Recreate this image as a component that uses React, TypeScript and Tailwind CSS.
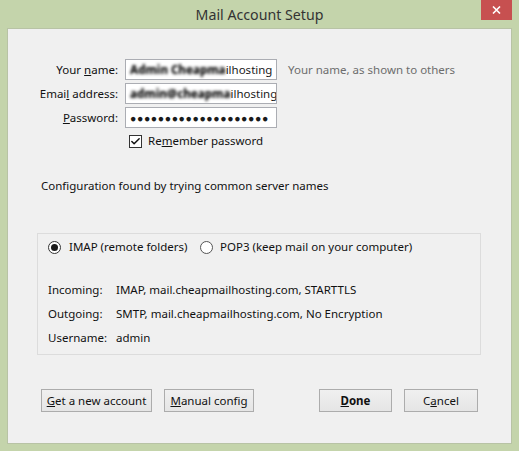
import { Check } from 'lucide-react';

const font = { fontFamily: '"Segoe UI", "Noto Sans", sans-serif' };

function Field({ children, blurred }: { children: React.ReactNode; blurred?: string }) {
  return (
    <div className="h-[21px] w-[152px] border border-[#abadb3] bg-white px-[4px] flex items-center overflow-hidden whitespace-nowrap text-[#1a1a1a]">
      {blurred && <span className="blur-[1.4px] font-extrabold text-black">{blurred}</span>}
      {children}
    </div>
  );
}

function Btn({ children, bold, w }: { children: React.ReactNode; bold?: boolean; w: string }) {
  return (
    <button
      className={`h-[23px] ${w} border border-[#acacac] bg-gradient-to-b from-[#f0f0f0] to-[#e5e5e5] text-[11.5px] leading-[16px] text-[#111] ${bold ? 'font-bold' : ''}`}
    >
      {children}
    </button>
  );
}

export default function App() {
  return (
    <div className="w-[519px] h-[451px] bg-[#c4d4ab] flex flex-col" style={font}>
      {/* title bar */}
      <div className="relative h-[28px] flex items-center justify-center">
        <span className="text-[14.2px] text-[#333] mt-[1px]">Mail Account Setup</span>
        <div className="absolute right-[7px] top-0 w-[31px] h-[20px] bg-[#c75050] flex items-center justify-center">
          <svg width="9" height="8" viewBox="0 0 9 8">
            <path d="M1 0.5 L8 7.5 M8 0.5 L1 7.5" stroke="white" strokeWidth="1.6" />
          </svg>
        </div>
      </div>

      {/* client area */}
      <div className="mx-[7px] h-[416px] bg-[#f0f0f0] border border-[#b8c3a5] text-[11.5px] leading-[16px] text-[#111] flex flex-col">
        <div className="grid grid-cols-[110px_159px_1fr] gap-y-[3px] items-center mt-[30px]">
          <div className="text-right">
            Your <u>n</u>ame:
          </div>
          <div className="ml-[7px]">
            <Field blurred="Admin Cheapma">ilhosting</Field>
          </div>
          <div className="ml-[11px] text-[#6d6d6d]">Your name, as shown to others</div>

          <div className="text-right">
            Emai<u>l</u> address:
          </div>
          <div className="ml-[7px]">
            <Field blurred="admin@cheapma">ilhosting.c</Field>
          </div>
          <div />

          <div className="text-right">
            <u>P</u>assword:
          </div>
          <div className="ml-[7px]">
            <Field>
              <span className="text-[10.5px] tracking-[0.6px]">●●●●●●●●●●●●●●●●●●●●</span>
            </Field>
          </div>
          <div />
        </div>

        <div className="flex items-center h-[16px] mt-[5px] ml-[121px] gap-[6px]">
          <div className="w-[13px] h-[13px] border border-[#333] bg-white flex items-center justify-center">
            <Check className="w-[11px] h-[11px]" strokeWidth={3.2} />
          </div>
          <span>
            Re<u>m</u>ember password
          </span>
        </div>

        <div className="ml-[33px] mt-[29px]">Configuration found by trying common server names</div>

        {/* result group */}
        <div className="ml-[29px] mt-[39px] w-[444px] h-[122px] border border-[#dcdcdc] flex flex-col">
          <div className="flex items-center h-[16px] mt-[5px] ml-[10px]">
            <div className="w-[152px] flex items-center">
              <div className="w-[13px] h-[13px] rounded-full border border-[#333] bg-white flex items-center justify-center">
                <div className="w-[7px] h-[7px] rounded-full bg-[#1a1a1a]" />
              </div>
              <span className="ml-[8px]">IMAP (remote folders)</span>
            </div>
            <div className="w-[13px] h-[13px] rounded-full border border-[#555] bg-white" />
            <span className="ml-[7px]">POP3 (keep mail on your computer)</span>
          </div>

          <div className="grid grid-cols-[68px_1fr] gap-y-[8px] mt-[27px] ml-[10px]">
            <div>Incoming:</div>
            <div>IMAP, mail.cheapmailhosting.com, STARTTLS</div>
            <div>Outgoing:</div>
            <div>SMTP, mail.cheapmailhosting.com, No Encryption</div>
            <div>Username:</div>
            <div>admin</div>
          </div>
        </div>

        <div className="flex items-center mt-[34px] ml-[33px]">
          <Btn w="w-[111px]">
            <u>G</u>et a new account
          </Btn>
          <div className="ml-[12px]">
            <Btn w="w-[90px]">
              <u>M</u>anual config
            </Btn>
          </div>
          <div className="ml-[65px]">
            <Btn w="w-[73px]" bold>
              <u>D</u>one
            </Btn>
          </div>
          <div className="ml-[12px]">
            <Btn w="w-[74px]">
              C<u>a</u>ncel
            </Btn>
          </div>
        </div>
      </div>
    </div>
  );
}
